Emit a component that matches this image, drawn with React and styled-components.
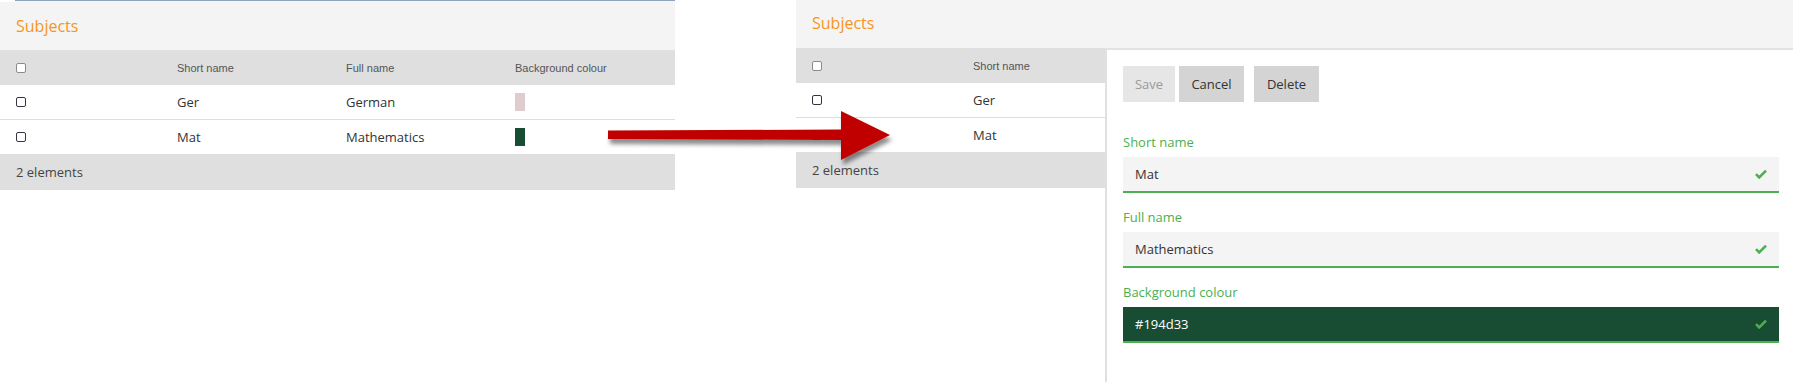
import React from "react";
import styled, { createGlobalStyle } from "styled-components";

const Global = createGlobalStyle`
  html, body { margin: 0; padding: 0; background: #fff; }
  body { font-family: "Open Sans", "Noto Sans", sans-serif; color: #333; }
  * { box-sizing: border-box; }
`;

const Page = styled.div`
  position: relative;
  display: flex;
  width: 1793px;
  height: 382px;
  overflow: hidden;
  background: #fff;
`;

const Shot = styled.div`
  display: flex;
  flex-direction: column;
  width: ${(p) => p.$w};
  flex: ${(p) => (p.$grow ? "1" : "none")};
  margin-left: ${(p) => p.$ml || "0"};
  position: relative;
`;

const TitleBar = styled.div`
  height: ${(p) => p.$h}px;
  background: #f4f4f4;
  display: flex;
  align-items: center;
  padding-left: 16px;
  padding-bottom: ${(p) => p.$pb || 0}px;
  font-size: 16px;
  color: #f7941e;
  position: relative;
`;

const TopLine = styled.div`
  height: 2px;
  margin-left: 15px;
  background: linear-gradient(#f4f4f4 0 0.5px, #8fa3bd 0.5px 1.5px, #f4f4f4 1.5px);
`;

const Table = styled.div`
  width: ${(p) => p.$w}px;
  flex: none;
  overflow: hidden;
`;

const Row = styled.div`
  display: grid;
  grid-template-columns: 161px 169px 169px 1fr;
  align-items: center;
  height: ${(p) => p.$h}px;
  background: ${(p) => p.$bg || "#fff"};
  border-bottom: ${(p) => (p.$divider ? "1px solid #dedede" : "none")};
`;

const HeadCell = styled.div`
  padding-left: 16px;
  font-family: "Liberation Sans", Arial, sans-serif;
  font-size: 11px;
  color: #555;
  white-space: nowrap;
  display: flex;
  align-items: center;
`;

const Cell = styled.div`
  padding-left: 16px;
  font-size: 13px;
  color: #333;
  white-space: nowrap;
  display: flex;
  align-items: center;
`;

const Check = styled.span`
  display: inline-block;
  width: 10px;
  height: 10px;
  border: 1px solid ${(p) => (p.$head ? "#8b8b8b" : "#3a3340")};
  border-radius: 2px;
  background: #fff;
`;

const Swatch = styled.span`
  display: inline-block;
  width: 10px;
  height: 18px;
  background: ${(p) => p.$color};
`;

const Footer = styled.div`
  height: 36px;
  background: #dfdfdf;
  display: flex;
  align-items: center;
  padding-left: 16px;
  font-size: 13px;
  color: #444;
`;

const Split = styled.div`
  display: flex;
  flex: 1;
`;

const FormPanel = styled.div`
  flex: 1;
  display: flex;
  flex-direction: column;
  border-left: 2px solid #e0e0e0;
  border-top: 2px solid #e2e2e2;
  padding: 16px 14px 0 16px;
  background: #fff;
`;

const Toolbar = styled.div`
  display: flex;
  gap: 4px;
  margin-bottom: 16px;
`;

const Button = styled.button`
  height: 36px;
  width: ${(p) => p.$w}px;
  border: none;
  padding: 0;
  margin-left: ${(p) => p.$ml || 0}px;
  font-family: "Open Sans", sans-serif;
  font-size: 13px;
  background: ${(p) => (p.$disabled ? "#e6e6e6" : "#d4d4d4")};
  color: ${(p) => (p.$disabled ? "#9a9a9a" : "#333")};
`;

const Label = styled.div`
  font-size: 13px;
  line-height: 18px;
  color: #4caf50;
  margin: 15px 0 6px;
`;

const Input = styled.div`
  height: 36px;
  flex: none;
  background: ${(p) => p.$bg || "#f4f4f4"};
  border-bottom: 2px solid #4caf50;
  display: flex;
  align-items: center;
  justify-content: space-between;
  padding: 0 12px;
  font-size: 13px;
  color: ${(p) => p.$fg || "#333"};
`;

const ArrowWrap = styled.svg`
  position: absolute;
  left: 600px;
  top: 100px;
`;

const Tick = () => (
  <svg width="12" height="10" viewBox="0 0 12 10">
    <path d="M1 5.2 L4.2 8.4 L11 1.6" fill="none" stroke="#4caf50" strokeWidth="2.6" strokeLinejoin="miter" />
  </svg>
);

const rows = [
  { short: "Ger", full: "German", color: "#e0cccc" },
  { short: "Mat", full: "Mathematics", color: "#194d33" },
];

const SubjectTable = ({ width, cols }) => (
  <Table $w={width}>
    <Row $h={35} $bg="#dfdfdf">
      <HeadCell><Check $head /></HeadCell>
      <HeadCell>Short name</HeadCell>
      {cols > 2 && <HeadCell>Full name</HeadCell>}
      {cols > 2 && <HeadCell>Background colour</HeadCell>}
    </Row>
    {rows.map((r, i) => (
      <Row key={r.short} $h={i === 0 ? 35 : 34} $divider={i === 0}>
        <Cell><Check /></Cell>
        <Cell>{r.short}</Cell>
        {cols > 2 && <Cell>{r.full}</Cell>}
        {cols > 2 && <Cell><Swatch $color={r.color} /></Cell>}
      </Row>
    ))}
    <Footer>2 elements</Footer>
  </Table>
);

export default function App() {
  return (
    <>
      <Global />
      <Page>
        <Shot $w="675px">
          <TopLine />
          <TitleBar $h={48}>Subjects</TitleBar>
          <SubjectTable width={675} cols={4} />
        </Shot>
        <Shot $grow $ml="121px">
          <TitleBar $h={48} $pb={2}>Subjects</TitleBar>
          <Split>
            <SubjectTable width={309} cols={2} />
            <FormPanel>
              <Toolbar>
                <Button $w={52} $disabled>Save</Button>
                <Button $w={65}>Cancel</Button>
                <Button $w={65} $ml={6}>Delete</Button>
              </Toolbar>
              <Label>Short name</Label>
              <Input>
                <span>Mat</span>
                <Tick />
              </Input>
              <Label>Full name</Label>
              <Input>
                <span>Mathematics</span>
                <Tick />
              </Input>
              <Label>Background colour</Label>
              <Input $bg="#194d33" $fg="#fff">
                <span>#194d33</span>
                <Tick />
              </Input>
            </FormPanel>
          </Split>
        </Shot>
        <ArrowWrap width="300" height="80" viewBox="600 100 300 80">
          <defs>
            <filter id="sh" x="-10%" y="-30%" width="130%" height="180%">
              <feDropShadow dx="2" dy="5" stdDeviation="2.2" floodColor="#000" floodOpacity="0.45" />
            </filter>
          </defs>
          <g filter="url(#sh)" fill="#c00000">
            <polygon points="608,130.5 842,129.5 842,140 608,139" />
            <polygon points="841,111 890,135 841,160" />
          </g>
        </ArrowWrap>
      </Page>
    </>
  );
}
